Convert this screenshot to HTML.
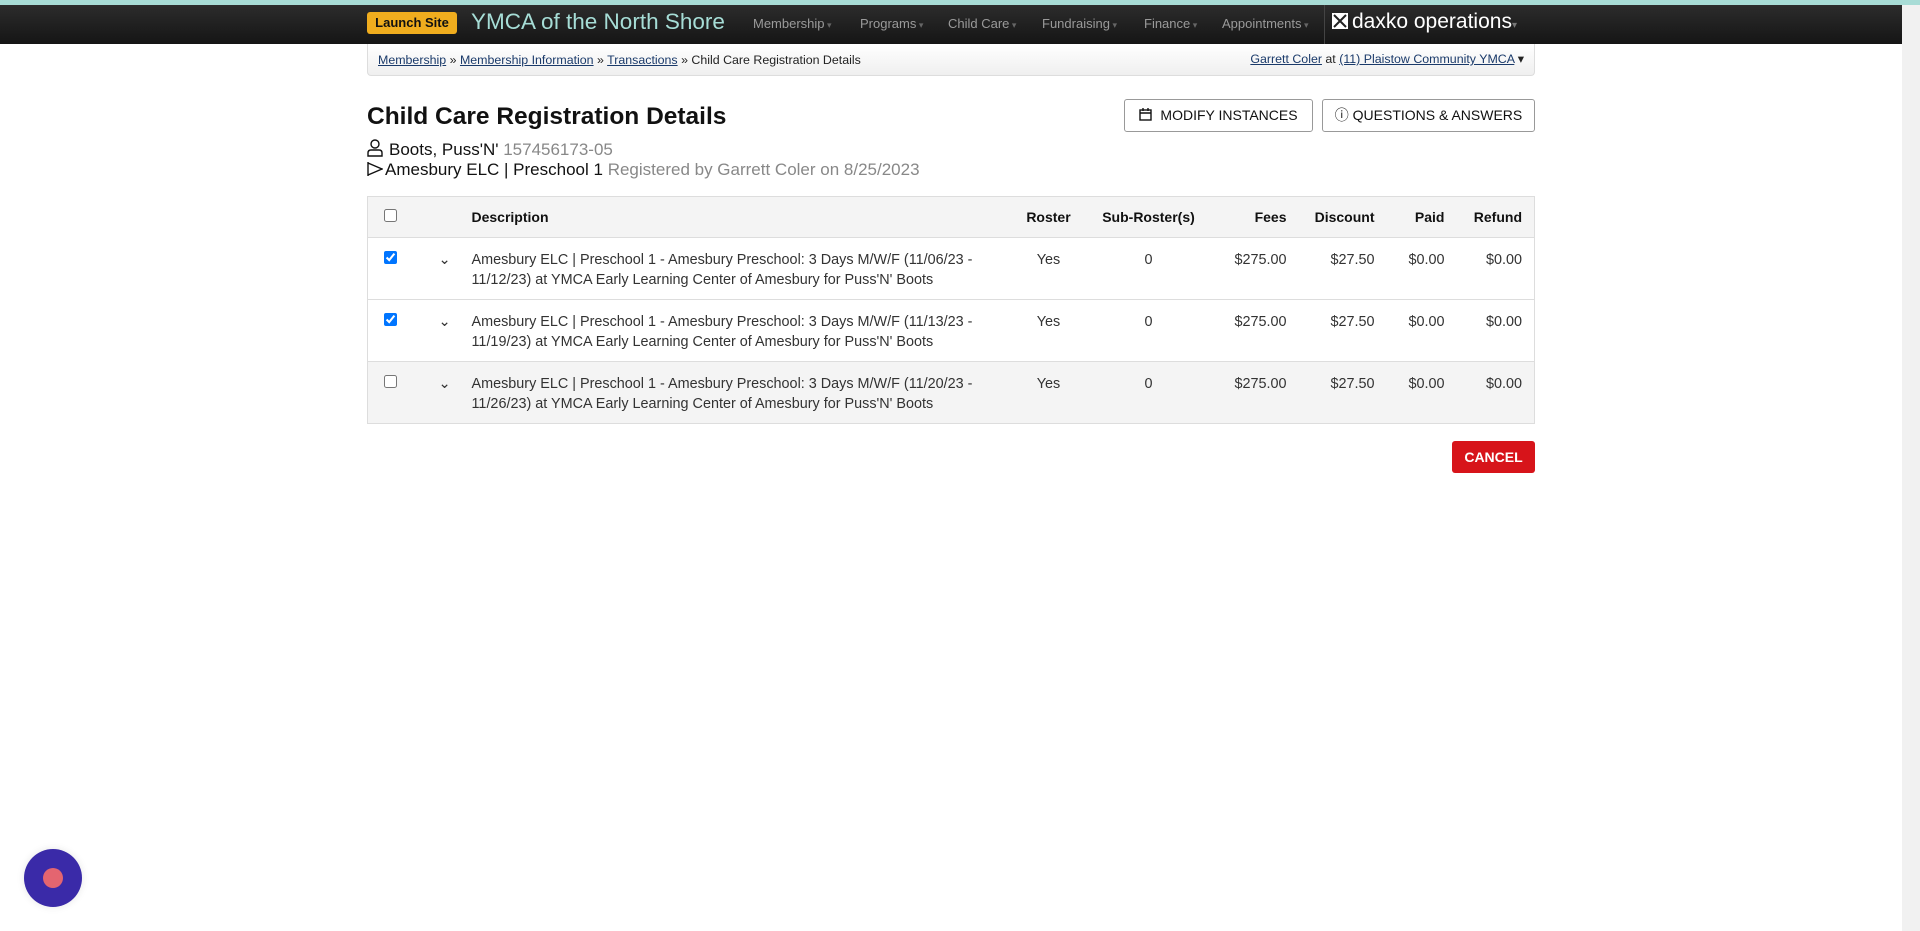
<!DOCTYPE html>
<html><head><meta charset="utf-8"><style>
*{box-sizing:border-box;margin:0;padding:0}
body{width:1920px;height:931px;overflow:hidden;background:#fff;font-family:"Liberation Sans",sans-serif;color:#222;position:relative}
.stripe{position:absolute;left:0;top:0;width:1920px;height:5px;background:#a8dcd6}
.bar{position:absolute;left:0;top:5px;width:1902px;height:39px;background:linear-gradient(#2c2c2c,#151515)}
.sb{position:absolute;right:0;top:5px;width:18px;height:926px;background:#f1f1f1}
.launch{position:absolute;left:367px;top:12px;width:90px;height:22px;background:#f0ad1e;border-radius:3px;font-size:13px;font-weight:bold;color:#111;text-align:center;line-height:22px}
.brand{position:absolute;left:471px;top:9px;font-size:22.5px;color:#a6ddd6}
.nav{position:absolute;top:16px;font-size:13px;color:#9a9a9a}
.nav:after{content:" ▾";font-size:9px;color:#666}
.div{position:absolute;left:1324px;top:5px;width:1px;height:39px;background:#444}
.daxko{position:absolute;left:1332px;top:10px;font-size:21px;color:#fff}
.crumb{position:absolute;left:367px;top:44px;width:1168px;height:32px;border:1px solid #ddd;border-top:none;border-radius:0 0 4px 4px;background:linear-gradient(#fff,#efefef);font-size:12.4px;color:#222}
.crumb a{color:#1a3a6a;text-decoration:underline}
.crumb .l{position:absolute;left:10px;top:9px}
.crumb .r{position:absolute;right:10px;top:7px}
h1{position:absolute;left:367px;top:103px;font-size:24.5px;font-weight:bold;color:#111}
.sub{position:absolute;left:367px;font-size:17px;color:#111}
.sub span{color:#888}
.btn{position:absolute;top:99px;height:33px;border:1px solid #999;border-radius:3px;font-size:14px;line-height:31px;text-align:center;color:#111;background:#fff}
table{position:absolute;left:367px;top:196px;width:1168px;border-collapse:collapse;font-size:14.4px;border:1px solid #ddd}
th{font-weight:bold;text-align:left;height:41px;background:#f4f4f4;color:#111;border-bottom:1px solid #ddd;font-size:14px}
td{height:62px;vertical-align:top;padding-top:13px;color:#333;border-bottom:1px solid #ddd;line-height:19.6px}
tr.g td{background:#f4f4f4}
.ra{text-align:right;padding-right:12px}
.c{text-align:center}
input{width:13px;height:13px;margin-left:16px}
.cancel{position:absolute;left:1452px;top:441px;width:83px;height:32px;background:#d7141a;color:#fff;font-weight:bold;font-size:14px;text-align:center;line-height:32px;border-radius:3px}
.chat{position:absolute;left:24px;top:849px;width:58px;height:58px;border-radius:50%;background:#3a2aa8;box-shadow:0 0 8px rgba(0,0,0,.1)}
.chat:after{content:"";position:absolute;left:19px;top:19px;width:20px;height:20px;border-radius:50%;background:#e46570}
</style></head><body>
<div class="stripe"></div><div class="bar"></div><div class="sb"></div>
<div class="launch">Launch Site</div>
<div class="brand">YMCA of the North Shore</div>
<div class="nav" style="left:753px">Membership</div>
<div class="nav" style="left:860px">Programs</div>
<div class="nav" style="left:948px">Child Care</div>
<div class="nav" style="left:1042px">Fundraising</div>
<div class="nav" style="left:1144px">Finance</div>
<div class="nav" style="left:1222px">Appointments</div>
<div class="div"></div>
<div class="daxko"><svg width="16" height="16" viewBox="0 0 16 16" style="vertical-align:-1px;margin-right:4px"><rect width="16" height="16" fill="#fff"/><path d="M2 2L14 14M14 2L2 14" stroke="#222" stroke-width="2"/></svg>daxko operations<span style="font-size:10px;color:#777">▾</span></div>
<div class="crumb"><div class="l"><a>Membership</a> » <a>Membership Information</a> » <a>Transactions</a> » Child Care Registration Details</div><div class="r"><a>Garrett Coler</a> at <a>(11) Plaistow Community YMCA</a> ▾</div></div>
<h1>Child Care Registration Details</h1>
<div class="sub" style="top:139px"><svg width="16" height="18" viewBox="0 0 16 18" style="vertical-align:-2px;margin-right:6px"><circle cx="8" cy="5" r="4" fill="none" stroke="#111" stroke-width="1.4"/><path d="M1 17V14Q1 11 4 11H12Q15 11 15 14V17Z" fill="none" stroke="#111" stroke-width="1.4"/></svg>Boots, Puss'N' <span>157456173-05</span></div>
<div class="sub" style="top:160px"><svg width="16" height="16" viewBox="0 0 16 16" style="vertical-align:-2px;margin-right:2px"><path d="M1 1V15M1 2L15 8L1 14" fill="none" stroke="#111" stroke-width="1.4"/></svg>Amesbury ELC | Preschool 1 <span>Registered by Garrett Coler on 8/25/2023</span></div>
<div class="btn" style="left:1124px;width:189px"><svg width="13" height="13" viewBox="0 0 13 13" style="vertical-align:-1px;margin-right:8px"><rect x="1" y="2" width="11" height="10" fill="none" stroke="#111" stroke-width="1.4"/><path d="M1 5H12M4 0V3M9 0V3" stroke="#111" stroke-width="1.4"/></svg>MODIFY INSTANCES</div>
<div class="btn" style="left:1322px;width:213px">ⓘ QUESTIONS &amp; ANSWERS</div>
<table>
<tr><th style="width:50px"><input type="checkbox"></th><th style="width:54px"></th><th>Description</th><th class="c" style="width:80px">Roster</th><th class="c" style="width:120px">Sub-Roster(s)</th><th class="ra" style="width:90px">Fees</th><th class="ra" style="width:88px">Discount</th><th class="ra" style="width:70px">Paid</th><th class="ra" style="width:78px">Refund</th></tr>
<tr><td><input type="checkbox" checked></td><td class="c">⌄</td><td>Amesbury ELC | Preschool 1 - Amesbury Preschool: 3 Days M/W/F (11/06/23 -<br>11/12/23) at YMCA Early Learning Center of Amesbury for Puss'N' Boots</td><td class="c">Yes</td><td class="c">0</td><td class="ra">$275.00</td><td class="ra">$27.50</td><td class="ra">$0.00</td><td class="ra">$0.00</td></tr>
<tr><td><input type="checkbox" checked></td><td class="c">⌄</td><td>Amesbury ELC | Preschool 1 - Amesbury Preschool: 3 Days M/W/F (11/13/23 -<br>11/19/23) at YMCA Early Learning Center of Amesbury for Puss'N' Boots</td><td class="c">Yes</td><td class="c">0</td><td class="ra">$275.00</td><td class="ra">$27.50</td><td class="ra">$0.00</td><td class="ra">$0.00</td></tr>
<tr class="g"><td><input type="checkbox"></td><td class="c">⌄</td><td>Amesbury ELC | Preschool 1 - Amesbury Preschool: 3 Days M/W/F (11/20/23 -<br>11/26/23) at YMCA Early Learning Center of Amesbury for Puss'N' Boots</td><td class="c">Yes</td><td class="c">0</td><td class="ra">$275.00</td><td class="ra">$27.50</td><td class="ra">$0.00</td><td class="ra">$0.00</td></tr>
</table>
<div class="cancel">CANCEL</div>
<div class="chat"></div>
</body></html>
